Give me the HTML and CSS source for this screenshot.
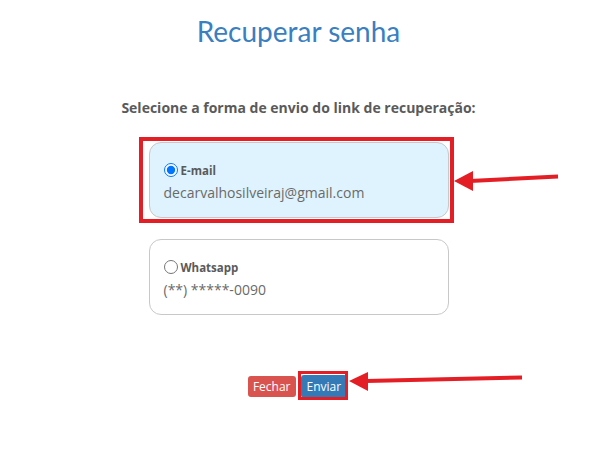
FILE: index.html
```html
<!DOCTYPE html>
<html lang="pt-BR">
  <head>
    <meta charset="UTF-8" />
    <meta name="viewport" content="width=device-width, initial-scale=1.0" />
    <title>Recuperar senha</title>
    <link rel="stylesheet" href="styles.css">
  </head>
  <body>
    <div class="modal">
      <h1 class="modal-title">Recuperar senha</h1>
      <p class="modal-lead">Selecione a forma de envio do link de recuperação:</p>

      <div class="options">
        <label class="option option-active">
          <span class="option-head">
            <input type="radio" name="canal" value="email" checked />
            <strong>E-mail</strong>
          </span>
          <span class="option-value">decarvalhosilveiraj@gmail.com</span>
        </label>

        <label class="option">
          <span class="option-head">
            <input type="radio" name="canal" value="whatsapp" />
            <strong>Whatsapp</strong>
          </span>
          <span class="option-value">(**) *****-0090</span>
        </label>
      </div>

      <div class="actions">
        <button type="button" class="btn btn-danger">Fechar</button>
        <button type="submit" class="btn btn-primary">Enviar</button>
      </div>

      <!-- annotation layer drawn over the dialog -->
      <svg class="notes" width="597" height="450" viewBox="0 0 597 450">
        <rect x="141" y="139" width="311" height="82" fill="none" stroke="#e41e25" stroke-width="4" />
        <rect x="299.5" y="372.5" width="47" height="26" fill="none" stroke="#e41e25" stroke-width="3" />
        <line x1="470" y1="181" x2="558" y2="176.5" stroke="#e41e25" stroke-width="4" />
        <polygon points="454,181 473,171 473,191" fill="#e41e25" />
        <line x1="366" y1="381" x2="522" y2="377.5" stroke="#e41e25" stroke-width="4" />
        <polygon points="349,381 368,372 368,391" fill="#e41e25" />
      </svg>
    </div>
  </body>
</html>
```

FILE: styles.css
```css
:root {
  --blue: #3a7fc1;
  --red: #d9534f;
  --text: #5a5a5a;
  --muted: #6a6a6a;
  --border: #c8c8c8;
  --active-bg: #def3fd;
}

* {
  margin: 0;
  padding: 0;
  box-sizing: border-box;
}

body {
  font-family: "Open Sans", "Liberation Sans", sans-serif;
  background: #ffffff;
  color: var(--text);
}

.modal {
  position: relative;
  width: 597px;
  height: 450px;
  text-align: center;
}

.modal-title {
  padding-top: 13px;
  font-family: Lato, "Open Sans", sans-serif;
  font-size: 28px;
  font-weight: 400;
  line-height: 36px;
  color: var(--blue);
}

.modal-lead {
  margin-top: 50px;
  font-size: 14px;
  font-weight: 700;
  line-height: 18px;
  color: var(--text);
}

.options {
  display: flex;
  flex-direction: column;
  align-items: center;
  gap: 21px;
  margin-top: 25px;
}

.option {
  display: flex;
  flex-direction: column;
  gap: 5px;
  width: 300px;
  padding: 18px 14px 15px;
  border: 1px solid var(--border);
  border-radius: 12px;
  text-align: left;
  cursor: pointer;
}

.option-active {
  background: var(--active-bg);
}

.option-head {
  display: flex;
  align-items: center;
  gap: 3px;
  height: 18px;
}

.option-head input {
  width: 14px;
  height: 14px;
  margin: 0;
}

.option-head strong {
  font-size: 11.5px;
  font-weight: 700;
  color: var(--text);
}

.option-value {
  font-size: 14px;
  line-height: 18px;
  color: var(--muted);
}

.actions {
  display: flex;
  justify-content: center;
  align-items: center;
  gap: 5px;
  margin-top: 60px;
  padding-right: 2px;
}

.btn {
  padding: 2px 5px;
  border: none;
  border-radius: 3px;
  color: #ffffff;
  font-family: inherit;
  font-size: 12px;
  line-height: 17px;
  cursor: pointer;
}

.btn-danger {
  background: var(--red);
}

.btn-primary {
  background: #337ab7;
  padding: 3px 6px;
}

.notes {
  position: absolute;
  top: 0;
  left: 0;
  pointer-events: none;
}
```
